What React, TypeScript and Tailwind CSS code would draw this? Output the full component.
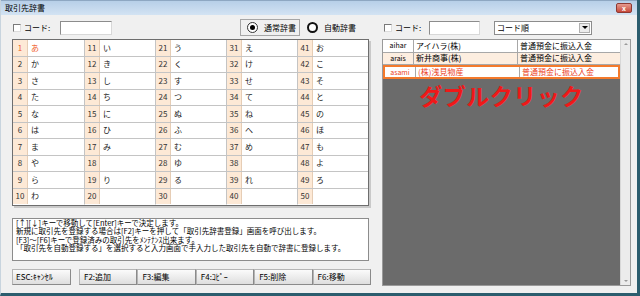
const kana = [
  ['あ', 'か', 'さ', 'た', 'な', 'は', 'ま', 'や', 'ら', 'わ'],
  ['い', 'き', 'し', 'ち', 'に', 'ひ', 'み', '', 'り', ''],
  ['う', 'く', 'す', 'つ', 'ぬ', 'ふ', 'む', 'ゆ', 'る', ''],
  ['え', 'け', 'せ', 'て', 'ね', 'へ', 'め', '', 'れ', ''],
  ['お', 'こ', 'そ', 'と', 'の', 'ほ', 'も', 'よ', 'ろ', ''],
]

const rows = [
  { code: 'aihar', name: 'アイハラ(株)', kind: '普通預金に振込入金', state: 'plain' },
  { code: 'arais', name: '新井商事(株)', kind: '普通預金に振込入金', state: 'alt' },
  { code: 'asami', name: '(株)浅見物産', kind: '普通預金に振込入金', state: 'selected' },
]

const buttons = ['F2:追加', 'F3:編集', 'F4:ｺﾋﾟｰ', 'F5:削除', 'F6:移動']

const CheckBox = () => (
  <div className="w-[8px] h-[8px] bg-white border border-t-[#7a7a7a] border-l-[#7a7a7a] border-r-[#dcdcdc] border-b-[#dcdcdc]" />
)

const TextBox = ({ w }: { w: string }) => (
  <div className={`${w} h-[14px] bg-white border border-[#8c8c8c] border-r-[#d8d8d8] border-b-[#d8d8d8]`} />
)

const KanaGrid = () => (
  <div className="w-[357px] h-[167px] bg-white border border-[#6e6e6e] shadow-[2px_2px_0_#c9c9c9] grid grid-rows-10 grid-flow-col grid-cols-5">
    {kana.flatMap((col, c) =>
      col.map((k, r) => {
        const n = c * 10 + r + 1
        const active = n === 1
        return (
          <div
            key={n}
            className={`flex items-stretch border-b ${r === 9 ? 'border-b-transparent' : 'border-b-[#c4c4c4]'} ${c > 0 ? 'border-l border-l-[#c4c4c4]' : ''}`}
          >
            <div
              className={`w-[15px] bg-[#fde9d6] border-r border-r-[#e6cdb5] flex items-center justify-center text-[8px] ${active ? 'text-[#f0602a]' : 'text-[#333]'}`}
            >
              {n}
            </div>
            <div className={`flex items-center pl-[3px] text-[8px] ${active ? 'text-[#f0602a]' : 'text-[#222]'}`}>{k}</div>
          </div>
        )
      })
    )}
  </div>
)

export default function App() {
  return (
    <div className="w-[640px] h-[296px] flex flex-col bg-[#f0f0f0] border-r-[3px] border-b-[3px] border-r-[#2c5d6e] border-b-[#2c5d6e] border-l border-l-[#c8d4de] font-['Noto_Sans_CJK_JP',sans-serif] text-black overflow-hidden">
      <div className="h-[15px] flex items-center justify-between pl-[4px] pr-[5px] bg-gradient-to-b from-[#b7cfe8] to-[#d3e3f3] border-t border-t-[#8ea7c2]">
        <span className="text-[8px] leading-none">取引先辞書</span>
        <div className="w-[16px] h-[10px] rounded-[2px] bg-gradient-to-b from-[#e59a8f] to-[#c7473a] border border-[#8e3a33] flex items-center justify-center text-[7px] leading-none text-white font-bold">
          x
        </div>
      </div>

      <div className="flex-1 flex">
        <div className="w-[370px] pl-[11px] flex flex-col">
          <div className="mt-[4px] h-[17px] flex items-center">
            <div className="ml-[1px]">
              <CheckBox />
            </div>
            <span className="ml-[3px] w-[36px] text-[8px] leading-none">コード:</span>
            <TextBox w="w-[52px]" />
            <div className="ml-[128px] h-[17px] w-[60px] border border-[#a6a6a6] flex items-center pl-[6px] gap-[6px]">
              <div className="w-[11px] h-[11px] rounded-full border border-[#333] bg-white flex items-center justify-center">
                <div className="w-[5px] h-[5px] rounded-full bg-black" />
              </div>
              <span className="text-[8px] leading-none">通常辞書</span>
            </div>
            <div className="ml-[7px] flex items-center gap-[6px]">
              <div className="w-[11px] h-[11px] rounded-full border-2 border-[#111] bg-white" />
              <span className="text-[8px] leading-none">自動辞書</span>
            </div>
          </div>

          <div className="mt-[3px]">
            <KanaGrid />
          </div>

          <div className="mt-[12px] w-[357px] h-[43px] bg-white border border-[#8c8c8c] px-[3px] text-[7.5px] leading-[8.4px] whitespace-nowrap overflow-hidden">
            <div>[↑][↓]キーで移動して[Enter]キーで決定します。</div>
            <div>新規に取引先を登録する場合は[F2]キーを押して「取引先辞書登録」画面を呼び出します。</div>
            <div>[F3]～[F6]キーで登録済みの取引先をﾒﾝﾃﾅﾝｽ出来ます。</div>
            <div>「取引先を自動登録する」を選択すると入力画面で手入力した取引先を自動で辞書に登録します。</div>
          </div>

          <div className="mt-[8px] flex">
            <div className="w-[59px] h-[16px] flex items-center px-[3px] text-[8px] leading-none bg-gradient-to-b from-[#fbfbfb] to-[#dedede] border border-[#b5b5b5] border-r-[#8a8a8a] border-b-[#8a8a8a]">
              ESC:ｷｬﾝｾﾙ
            </div>
            <div className="ml-[8px] flex">
              {buttons.map(b => (
                <div
                  key={b}
                  className="w-[58.4px] h-[16px] flex items-center px-[4px] text-[8px] leading-none bg-gradient-to-b from-[#fbfbfb] to-[#dedede] border border-[#b5b5b5] border-r-[#8a8a8a] border-b-[#8a8a8a]"
                >
                  {b}
                </div>
              ))}
            </div>
          </div>
        </div>

        <div className="flex-1 pl-[11px] flex flex-col">
          <div className="mt-[4px] h-[17px] flex items-center">
            <div className="ml-[2px]">
              <CheckBox />
            </div>
            <span className="ml-[3px] w-[34px] text-[8px] leading-none">コード:</span>
            <TextBox w="w-[51px]" />
            <div className="ml-[14px] w-[98px] h-[14px] bg-white border border-[#8c8c8c] flex items-center">
              <span className="flex-1 pl-[2px] text-[8px] leading-none">コード順</span>
              <div className="w-[11px] h-[10px] mr-[1px] bg-[#ececec] border border-[#b0b0b0] flex items-center justify-center">
                <div className="w-0 h-0 border-l-[3px] border-r-[3px] border-t-[3px] border-l-transparent border-r-transparent border-t-black" />
              </div>
            </div>
          </div>

          <div className="mt-[3px] w-[249px] h-[247px] flex border border-[#9a9a9a]">
            <div className="flex-1 bg-[#6b6b6b] flex flex-col">
              {rows.map(r => {
                const sel = r.state === 'selected'
                return (
                  <div
                    key={r.code}
                    className={`flex text-[8px] leading-none ${sel ? 'h-[14px] bg-white border-2 border-[#f47a2c] text-[#ec3f24]' : `h-[12.5px] border-b border-b-[#a8a8a8] ${r.state === 'alt' ? 'bg-[#fdeee0]' : 'bg-white'}`}`}
                  >
                    <div className="w-[31px] flex items-center justify-center border-r border-r-[#a8a8a8] text-[7px]">{r.code}</div>
                    <div className="w-[104px] flex items-center pl-[2px] border-r border-r-[#a8a8a8]">{r.name}</div>
                    <div className="flex-1 flex items-center pl-[2px]">{r.kind}</div>
                  </div>
                )
              })}
              <div className="mt-[5px] flex justify-center text-[23px] leading-none font-bold text-[#f01818] tracking-[0.5px]">
                ダブルクリック
              </div>
            </div>
            <div className="w-[10px] bg-[#ececec] border-l border-l-[#d8d8d8] flex flex-col justify-between items-center py-[3px]">
              <div className="w-0 h-0 border-l-[2px] border-r-[2px] border-b-[2px] border-l-transparent border-r-transparent border-b-[#9a9a9a]" />
              <div className="w-0 h-0 border-l-[2px] border-r-[2px] border-t-[2px] border-l-transparent border-r-transparent border-t-[#9a9a9a]" />
            </div>
          </div>
        </div>
      </div>
    </div>
  )
}
